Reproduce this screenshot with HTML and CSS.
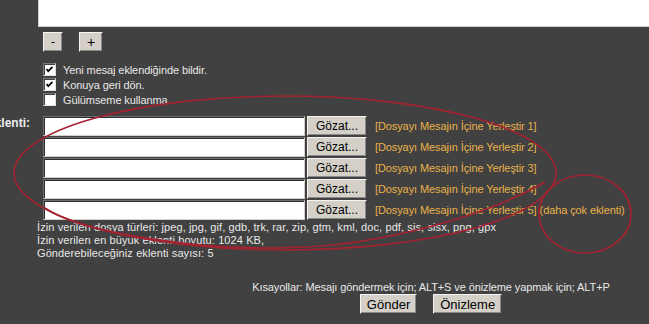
FILE: index.html
```html
<!DOCTYPE html>
<html lang="tr">
<head>
  <meta charset="UTF-8">
  <meta name="viewport" content="width=device-width, initial-scale=1.0">
  <title>Mesaj Gönder</title>
  <link rel="stylesheet" href="styles.css">
</head>
<body>
  <div class="editor"></div>

  <div class="resize">
    <button type="button" class="btn btn-minus">-</button>
    <button type="button" class="btn btn-plus">+</button>
  </div>

  <ul class="options">
    <li><span class="check"><svg viewBox="0 0 13 13"><polyline points="3,6 5,8.5 10,3.5"/></svg></span>Yeni mesaj eklendiğinde bildir.</li>
    <li><span class="check"><svg viewBox="0 0 13 13"><polyline points="3,6 5,8.5 10,3.5"/></svg></span>Konuya geri dön.</li>
    <li><span class="check"></span>Gülümseme kullanma.</li>
  </ul>

  <div class="attach">
    <div class="attach-label">Eklenti:</div>
    <div class="attach-rows">
      <div class="attach-row">
        <input type="text" class="file-path">
        <button type="button" class="btn browse">Gözat...</button>
        <a class="insert" href="#">[Dosyayı Mesajın İçine Yerleştir 1]</a>
      </div>
      <div class="attach-row">
        <input type="text" class="file-path">
        <button type="button" class="btn browse">Gözat...</button>
        <a class="insert" href="#">[Dosyayı Mesajın İçine Yerleştir 2]</a>
      </div>
      <div class="attach-row">
        <input type="text" class="file-path">
        <button type="button" class="btn browse">Gözat...</button>
        <a class="insert" href="#">[Dosyayı Mesajın İçine Yerleştir 3]</a>
      </div>
      <div class="attach-row">
        <input type="text" class="file-path">
        <button type="button" class="btn browse">Gözat...</button>
        <a class="insert" href="#">[Dosyayı Mesajın İçine Yerleştir 4]</a>
      </div>
      <div class="attach-row">
        <input type="text" class="file-path">
        <button type="button" class="btn browse">Gözat...</button>
        <a class="insert" href="#">[Dosyayı Mesajın İçine Yerleştir 5]</a>
        <a class="insert more" href="#">(daha çok eklenti)</a>
      </div>
    </div>
  </div>

  <div class="info">
    <div>İzin verilen dosya türleri: jpeg, jpg, gif, gdb, trk, rar, zip, gtm, kml, doc, pdf, sis, sisx, png, gpx</div>
    <div>İzin verilen en büyük eklenti boyutu: 1024 KB,</div>
    <div>Gönderebileceğiniz eklenti sayısı: 5</div>
  </div>

  <div class="actions">
    <div class="shortcuts">Kısayollar: Mesajı göndermek için; ALT+S ve önizleme yapmak için; ALT+P</div>
    <div class="submit-row">
      <button type="button" class="btn submit">Gönder</button>
      <button type="button" class="btn submit">Önizleme</button>
    </div>
  </div>

  <!-- hand drawn red marks over the form -->
  <svg class="marks" viewBox="0 0 649 324">
    <ellipse cx="285" cy="173" rx="271" ry="77"/>
    <path d="M 45 208 C 70 225 120 236 190 244 C 250 250 320 250 380 238 C 440 226 500 208 545 182"/>
    <ellipse cx="585" cy="214" rx="46" ry="39"/>
  </svg>
</body>
</html>
```

FILE: styles.css
```css
html, body {
  margin: 0;
  overflow: hidden;
}
body {
  background: #414141;
  color: #e8e8e8;
  font-family: 'Liberation Sans', Arial, sans-serif;
  font-size: 11px;
  letter-spacing: -0.1px;
  height: 324px;
  position: relative;
}
.editor {
  margin-left: 38px;
  height: 26px;
  background: #fff;
  border-left: 1px solid #d0d0d0;
  border-bottom: 1px solid #cfcfcf;
}
.btn {
  background: #d4d0c8;
  color: #000;
  font-family: 'Liberation Sans', Arial, sans-serif;
  font-size: 12px;
  letter-spacing: 0;
  border: 1px solid;
  border-color: #f4f4f4 #404040 #404040 #f4f4f4;
  box-shadow: inset -1px -1px 0 #8a8a8a;
  padding: 0;
  height: 20px;
  cursor: pointer;
}
.resize {
  display: flex;
  gap: 16px;
  margin: 5px 0 0 43px;
}
.btn-minus { width: 20px; }
.btn-plus { width: 24px; font-size: 14px; }
.options {
  list-style: none;
  margin: 10px 0 0 43px;
  padding: 0;
}
.options li {
  display: flex;
  align-items: center;
  gap: 7px;
  height: 15px;
}
.check {
  width: 13px;
  height: 13px;
  box-sizing: border-box;
  background: #fff;
  border: 1px solid;
  border-color: #7a7a7a #e0e0e0 #e0e0e0 #7a7a7a;
  box-shadow: inset 1px 1px 0 #404040;
  display: flex;
}
.check svg {
  width: 11px;
  height: 11px;
  fill: none;
  stroke: #000;
  stroke-width: 2;
}
.attach {
  display: flex;
  margin-top: 9px;
}
.attach-label {
  width: 43px;
  flex: none;
  display: flex;
  justify-content: flex-end;
  padding-right: 13px;
  box-sizing: border-box;
  font-size: 12px;
  font-weight: bold;
  letter-spacing: 0;
  color: #eee;
  line-height: 15px;
  white-space: nowrap;
}
.attach-rows {
  display: flex;
  flex-direction: column;
  gap: 1px;
}
.attach-row {
  display: flex;
  align-items: center;
  white-space: nowrap;
}
.file-path {
  width: 262px;
  height: 20px;
  box-sizing: border-box;
  margin: 0 2px 0 0;
  background: #fff;
  border: 1px solid;
  border-color: #6e6e6e #d4d0c8 #d4d0c8 #6e6e6e;
  box-shadow: inset 1px 1px 0 #2e2e2e;
  padding: 0 3px;
  outline: none;
}
.browse {
  width: 60px;
  margin-right: 8px;
}
.insert {
  color: #eab24a;
  text-decoration: none;
}
.more { margin-left: 3px; }
.info {
  margin: 1px 0 0 37px;
  line-height: 13px;
  letter-spacing: 0.1px;
}
.actions {
  margin: 21px 0 0 213px;
  text-align: center;
}
.shortcuts {
  line-height: 13px;
}
.submit-row {
  display: flex;
  justify-content: center;
  gap: 16px;
}
.submit {
  font-size: 13px;
  padding: 0 6px;
}
.marks {
  position: absolute;
  top: 0;
  left: 0;
  width: 649px;
  height: 324px;
  pointer-events: none;
  fill: none;
  stroke: #a52230;
  stroke-width: 1.6;
}
```
